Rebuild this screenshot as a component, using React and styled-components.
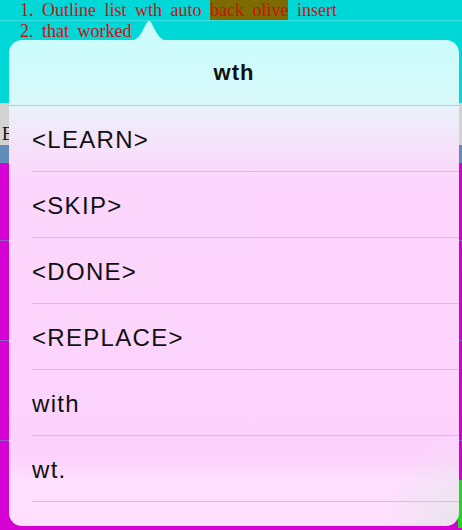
import React from "react";
import styled, { createGlobalStyle } from "styled-components";

const GlobalStyle = createGlobalStyle`
    html, body {
        margin: 0;
        padding: 0;
        background: #d400d4;
    }
`;

const data = {
    lines: [
        { num: "1.", words: ["Outline list wth auto ", "back olive", " insert"] },
        { num: "2.", words: ["that worked"] },
    ],
    title: "wth",
    items: ["<LEARN>", "<SKIP>", "<DONE>", "<REPLACE>", "with", "wt.", ""],
};

const Page = styled.div`
    position: relative;
    width: 462px;
    height: 530px;
    overflow: hidden;
    background: #d400d4;
`;

const TopSection = styled.section`
    height: 103px;
    background: #00d8d8;
    font-family: "Liberation Serif", serif;
    font-size: 18px;
    color: #cc1010;
`;

const Line = styled.div`
    display: flex;
    height: 20px;
    line-height: 20px;
    padding-left: 20px;
    word-spacing: 4px;
    white-space: pre;
    border-bottom: ${({ $ruled }) => ($ruled ? "1px solid #3ce2e2" : "none")};
`;

const Num = styled.span`
    width: 22px;
`;

const Mark = styled.span`
    background: #7d6a00;
`;

const GrayBand = styled.div`
    height: 42px;
    background: #d3d3d3;
    font-family: "Liberation Serif", serif;
    font-size: 18px;
    line-height: 20px;
    padding: 21px 0 0 2px;
    box-sizing: border-box;
    color: #111;
`;

const BlueBand = styled.div`
    height: 18px;
    background: #5f8cb8;
`;

const MagentaRow = styled.div`
    display: flex;
    justify-content: flex-end;
    align-items: flex-start;
    height: ${({ $h }) => $h}px;
    box-sizing: border-box;
    border-top: ${({ $first }) => ($first ? "none" : "1px solid #8c60c8")};
`;

const GreenCell = styled.div`
    width: 4px;
    height: 48px;
    margin-top: 39px;
    background: #20d820;
`;

const Popover = styled.div`
    position: absolute;
    left: 9px;
    top: 40px;
    width: 450px;
    height: 486px;
    border-radius: 13px;
    overflow: hidden;
    font-family: "Liberation Sans", Arial, sans-serif;
    color: #111;
    background:
        radial-gradient(ellipse 70px 90px at 100% 100%, rgba(232, 230, 236, 1) 0%, rgba(232, 230, 236, 0) 100%),
        linear-gradient(180deg, rgba(255, 255, 255, 0) 0px, rgba(255, 255, 255, 0) 420px, rgba(254, 228, 254, 0.7) 440px),
        linear-gradient(180deg, #cbfbfb 0px, #d8f8f9 66px, #eaf1f9 67px, #f4e4fa 100px, #fdd6fd 140px, #fdd2fd 100%);
`;

const Arrow = styled.svg`
    position: absolute;
    left: 127px;
    top: 21px;
    width: 44px;
    height: 20px;
    display: block;
`;

const Header = styled.div`
    height: 66px;
    display: flex;
    align-items: center;
    justify-content: center;
    border-bottom: 1px solid #c2caca;
    font-weight: bold;
    font-size: 22px;
    letter-spacing: 1px;
    padding-top: 1px;
    box-sizing: border-box;
`;

const Item = styled.div`
    position: relative;
    height: 66px;
    display: flex;
    align-items: center;
    padding-left: 23px;
    padding-top: 2px;
    box-sizing: border-box;
    font-size: 24px;
    letter-spacing: 1.3px;

    &::after {
        content: "";
        position: absolute;
        left: 23px;
        right: 0;
        bottom: 0;
        height: 1px;
        background: #f0aef2;
    }
`;

function App() {
    return (
        <>
            <GlobalStyle />
            <Page>
                <TopSection>
                    {data.lines.map((line, i) => (
                        <Line key={line.num} $ruled={i === 0}>
                            <Num>{line.num}</Num>
                            {line.words.map((w, j) =>
                                w === "back olive" ? <Mark key={j}>{w}</Mark> : <span key={j}>{w}</span>
                            )}
                        </Line>
                    ))}
                </TopSection>
                <GrayBand>Before</GrayBand>
                <BlueBand />
                <MagentaRow $h={77} $first />
                <MagentaRow $h={100} />
                <MagentaRow $h={100} />
                <MagentaRow $h={100}>
                    <GreenCell />
                </MagentaRow>

                <Arrow viewBox="0 0 44 20">
                    <path
                        d="M0 20 C8 20 12 17 16 9 C19 3 20.5 0 22 0 C23.5 0 25 3 28 9 C32 17 36 20 44 20 Z"
                        fill="#cbfbfb"
                    />
                </Arrow>
                <Popover>
                    <Header>{data.title}</Header>
                    {data.items.map((item, i) => (
                        <Item key={i}>{item}</Item>
                    ))}
                </Popover>
            </Page>
        </>
    );
}

export default App;
